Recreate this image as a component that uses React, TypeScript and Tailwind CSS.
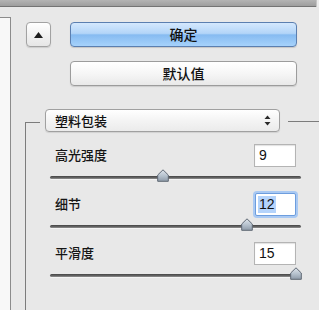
const cjk = "font-['Noto_Sans_CJK_SC','Noto_Sans',sans-serif]"

const params = [
  { label: '高光强度', value: '9', thumb: 113, focused: false },
  { label: '细节', value: '12', thumb: 197, focused: true },
  { label: '平滑度', value: '15', thumb: 246, focused: false },
]

function Slider({ thumb }: { thumb: number }) {
  return (
    <div className="relative ml-[24px] h-[27px] w-[251px] pt-[10px]">
      <div className="h-[3px] rounded-full bg-[linear-gradient(to_bottom,#444,#666_60%,#959595)] shadow-[0_1px_0_#f4f4f4]" />
      <svg
        className="absolute top-[3px]"
        style={{ left: thumb - 6 }}
        width="12"
        height="13"
        viewBox="0 0 12 13"
      >
        <defs>
          <linearGradient id={`g${thumb}`} x1="0" y1="0" x2="0" y2="1">
            <stop offset="0" stopColor="#dfe5ec" />
            <stop offset="0.55" stopColor="#b4c0cc" />
            <stop offset="1" stopColor="#8e9aa8" />
          </linearGradient>
        </defs>
        <path
          d="M6 0.8 L11.3 6 L11.3 12.3 L0.7 12.3 L0.7 6 Z"
          fill={`url(#g${thumb})`}
          stroke="#5f6874"
          strokeWidth="1"
          strokeLinejoin="round"
        />
      </svg>
    </div>
  )
}

export default function App() {
  return (
    <div className="flex h-[310px] w-[319px] flex-col overflow-hidden bg-[#e8e8e8] font-['Liberation_Sans',sans-serif]">
      <div className="flex h-[7px]">
        <div className="h-[7px] w-[316px] border-b border-[#747474] bg-[linear-gradient(to_bottom,#b4b4b4,#9e9e9e)]" />
        <div className="w-[3px] border-l border-[#c4c4c4] bg-[#ececec]" />
      </div>

      <div className="flex flex-1">
        <div className="mt-[10px] w-[11px] border-t border-r border-[#8c8c8c] bg-[#f8f8f8]" />

        <div className="flex flex-1 flex-col pt-[15px]">
          <div className="flex pl-[15px]">
            <button className="flex h-[25px] w-[25px] items-center justify-center rounded-[4px] border border-[#a2a2a2] bg-[linear-gradient(to_bottom,#ffffff,#f2f2f2_50%,#e6e6e6)] shadow-[0_1px_1px_rgba(0,0,0,0.12)]">
              <svg width="9" height="6" viewBox="0 0 9 6">
                <path d="M4.5 0 L9 6 L0 6 Z" fill="#1e1e1e" />
              </svg>
            </button>
            <button
              className={`ml-[19px] h-[25px] w-[227px] rounded-[4px] border border-[#5b7fb0] bg-[linear-gradient(to_bottom,#d4e8fd,#b3d5f8_45%,#86bbf1_52%,#a6d2fb_100%)] text-[14px] font-medium text-[#111] shadow-[0_1px_1px_rgba(0,0,0,0.15)] ${cjk}`}
            >
              确定
            </button>
          </div>

          <div className="mt-[14px] pl-[59px]">
            <button
              className={`h-[25px] w-[227px] rounded-[4px] border border-[#9c9c9c] bg-[linear-gradient(to_bottom,#ffffff,#f6f6f6_50%,#e9e9e9)] text-[14px] font-medium text-[#111] shadow-[0_1px_1px_rgba(0,0,0,0.12)] ${cjk}`}
            >
              默认值
            </button>
          </div>

          <div className="mt-[23px] ml-[14px] flex flex-1 flex-col">
            <div className="flex h-[23px]">
              <div className="h-[10px] w-[15px] self-end border-t border-l border-[#7c7c7c]" />
              <div
                className={`ml-[5px] flex h-[23px] w-[235px] items-center justify-between rounded-[4px] border border-[#a0a0a0] bg-[linear-gradient(to_bottom,#ffffff,#f4f4f4_50%,#ebebeb)] pr-[8px] pl-[9px] text-[13px] font-medium text-[#111] shadow-[0_1px_1px_rgba(0,0,0,0.1)] ${cjk}`}
              >
                <span>塑料包装</span>
                <svg width="7" height="11" viewBox="0 0 7 11">
                  <path d="M3.5 0.5 L6.5 4 L0.5 4 Z" fill="#2a2a2a" />
                  <path d="M3.5 10.5 L6.5 7 L0.5 7 Z" fill="#2a2a2a" />
                </svg>
              </div>
              <div className="ml-[8px] h-[11px] flex-1 self-end border-t border-[#7c7c7c]" />
            </div>

            <div className="w-[281px] flex-1 border-l border-[#7c7c7c] pt-[12px]">
              {params.map((p) => (
                <div key={p.label}>
                  <div className="flex h-[22px] items-center justify-between pr-[10px] pl-[29px]">
                    <span className={`text-[13px] font-medium text-[#151515] ${cjk}`}>{p.label}</span>
                    {p.focused ? (
                      <div className="flex h-[23px] w-[41px] items-center rounded-[2px] border border-[#6d9ddd] bg-white pl-[2px] shadow-[0_0_0_2px_#a9c9f3]">
                        <span className="bg-[#b4d3fb] px-[1px] text-[14px] leading-[17px] text-[#111]">{p.value}</span>
                      </div>
                    ) : (
                      <div className="flex h-[23px] w-[42px] items-center border border-[#b4b4b4] bg-white pl-[4px] text-[14px] text-[#111] shadow-[inset_0_1px_1px_rgba(0,0,0,0.12)]">
                        {p.value}
                      </div>
                    )}
                  </div>
                  <Slider thumb={p.thumb} />
                </div>
              ))}
            </div>
          </div>
        </div>
      </div>
    </div>
  )
}
